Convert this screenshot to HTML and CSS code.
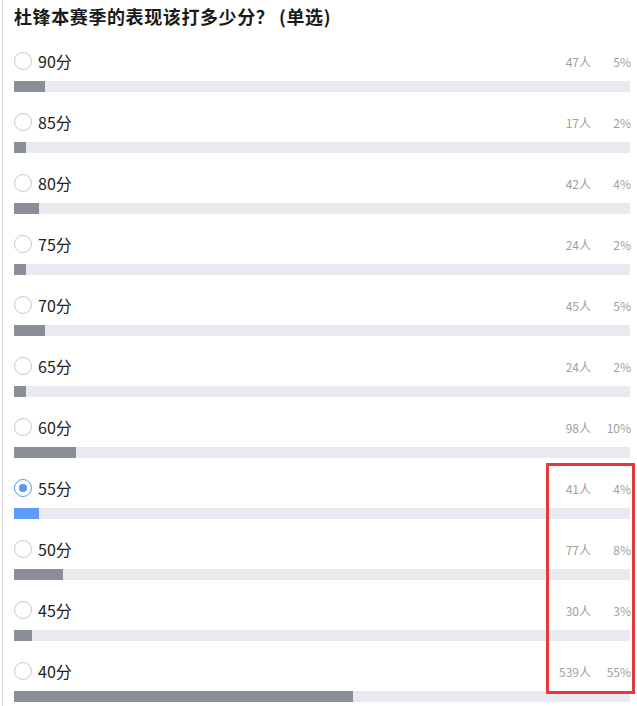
FILE: index.html
```html
<!DOCTYPE html>
<html lang="zh">
<head>
<meta charset="utf-8">
<link rel="stylesheet" href="styles.css">
</head>
<body>
<div class="poll">
  <h1 class="title">杜锋本赛季的表现该打多少分？ (单选)</h1>
  <ul class="options">
    <li class="option"><div class="head"><span class="radio"></span><span class="label">90分</span><span class="count">47人</span><span class="pct">5%</span></div><div class="track"><div class="fill" style="width:5%"></div></div></li>
    <li class="option"><div class="head"><span class="radio"></span><span class="label">85分</span><span class="count">17人</span><span class="pct">2%</span></div><div class="track"><div class="fill" style="width:2%"></div></div></li>
    <li class="option"><div class="head"><span class="radio"></span><span class="label">80分</span><span class="count">42人</span><span class="pct">4%</span></div><div class="track"><div class="fill" style="width:4%"></div></div></li>
    <li class="option"><div class="head"><span class="radio"></span><span class="label">75分</span><span class="count">24人</span><span class="pct">2%</span></div><div class="track"><div class="fill" style="width:2%"></div></div></li>
    <li class="option"><div class="head"><span class="radio"></span><span class="label">70分</span><span class="count">45人</span><span class="pct">5%</span></div><div class="track"><div class="fill" style="width:5%"></div></div></li>
    <li class="option"><div class="head"><span class="radio"></span><span class="label">65分</span><span class="count">24人</span><span class="pct">2%</span></div><div class="track"><div class="fill" style="width:2%"></div></div></li>
    <li class="option"><div class="head"><span class="radio"></span><span class="label">60分</span><span class="count">98人</span><span class="pct">10%</span></div><div class="track"><div class="fill" style="width:10%"></div></div></li>
    <li class="option selected"><div class="head"><span class="radio"></span><span class="label">55分</span><span class="count">41人</span><span class="pct">4%</span></div><div class="track"><div class="fill" style="width:4%"></div></div></li>
    <li class="option"><div class="head"><span class="radio"></span><span class="label">50分</span><span class="count">77人</span><span class="pct">8%</span></div><div class="track"><div class="fill" style="width:8%"></div></div></li>
    <li class="option"><div class="head"><span class="radio"></span><span class="label">45分</span><span class="count">30人</span><span class="pct">3%</span></div><div class="track"><div class="fill" style="width:3%"></div></div></li>
    <li class="option"><div class="head"><span class="radio"></span><span class="label">40分</span><span class="count">539人</span><span class="pct">55%</span></div><div class="track"><div class="fill" style="width:55%"></div></div></li>
  </ul>
  <div class="highlight"></div>
</div>
</body>
</html>
```

FILE: styles.css
```css
html, body {
  margin: 0;
  padding: 0;
  background: #fff;
}
body {
  font-family: "Noto Sans CJK SC", "Noto Sans", sans-serif;
  color: #222;
  overflow: hidden;
}
.poll {
  position: relative;
  margin-left: 2px;
  border-left: 1px solid #dcdcdc;
  padding: 3px 7px 0 11px;
  min-height: 706px;
  box-sizing: border-box;
}
.title {
  margin: 0;
  font-size: 18px;
  line-height: 26px;
  font-weight: 700;
  letter-spacing: 0.6px;
  color: #1a1a1a;
}
.options {
  list-style: none;
  margin: 20px 0 0;
  padding: 0;
}
.option {
  height: 61px;
}
.head {
  display: flex;
  align-items: center;
  height: 24px;
  margin-right: -1px;
}
.radio {
  width: 18px;
  height: 18px;
  border: 1px solid #c8c8c8;
  border-radius: 50%;
  box-sizing: border-box;
  margin-right: 6px;
  flex: none;
  display: flex;
  align-items: center;
  justify-content: center;
}
.selected .radio {
  border-color: #5b95f5;
}
.selected .radio::after {
  content: "";
  width: 8px;
  height: 8px;
  border-radius: 50%;
  background: #5b95f5;
}
.label {
  font-size: 16px;
  color: #222;
  flex: 1;
}
.count, .pct {
  font-size: 12px;
  color: #a0a0a0;
  text-align: right;
}
.count {
  width: 40px;
}
.pct {
  width: 40px;
}
.track {
  margin-top: 8px;
  height: 11px;
  background: #e8eaf0;
}
.fill {
  height: 100%;
  background: #8a8f97;
}
.selected .fill {
  background: #5c9bf7;
}
.highlight {
  position: absolute;
  left: 543px;
  top: 463px;
  width: 89px;
  height: 231px;
  border: 3px solid #e5393d;
  box-sizing: border-box;
}
```
